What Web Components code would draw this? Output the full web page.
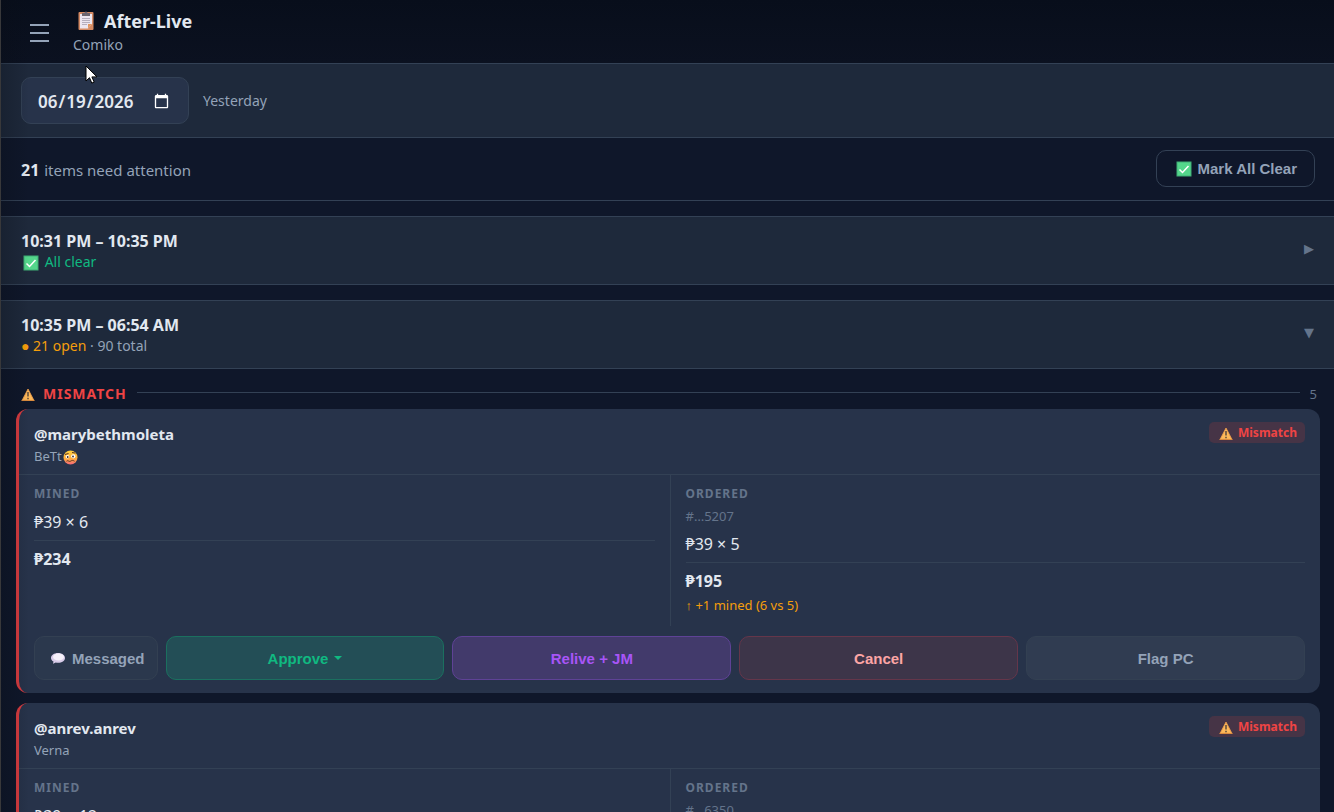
<!DOCTYPE html>
<html lang="en">
<head>
<meta charset="utf-8">
<meta name="viewport" content="width=device-width, initial-scale=1">
<title>After-Live</title>
<style>
  html { background: #0f172a; }
  body {
    margin: 0;
    font-family: "Noto Sans", "Open Sans", sans-serif;
    font-size: 14px;
    line-height: 20px;
    color: #e2e8f0;
    --line: #334155;
    --panel: #1e293b;
    --card: #27334a;
    --muted: #94a3b8;
    --dim: #64748b;
    --red: #ef4444;
    --green: #10b981;
    --amber: #f59e0b;
    --purple: #a855f7;
  }
</style>
</head>
<body>
<app-shell>
  <app-header slot="header" heading="After-Live" shop="Comiko"></app-header>
  <date-bar value="2026-06-19">Yesterday</date-bar>
  <summary-bar count="21"></summary-bar>
  <session-group heading="10:31 PM – 10:35 PM">
    <span slot="status" style="color:var(--green)"><emoji-icon name="check" spaced></emoji-icon> All clear</span>
  </session-group>
  <session-group heading="10:35 PM – 06:54 AM" open>
    <span slot="status"><span style="color:var(--amber)">● 21 open</span> · 90 total</span>
    <section-heading count="5">Mismatch</section-heading>
    <order-card handle="@marybethmoleta">
      <span slot="name">BeTt<emoji-icon name="woozy"></emoji-icon></span>
      <order-column slot="mined" heading="Mined" line="₱39 × 6" total="₱234"></order-column>
      <order-column slot="ordered" heading="Ordered" ref="#…5207" line="₱39 × 5" total="₱195" note="↑ +1 mined (6 vs 5)"></order-column>
    </order-card>
    <order-card handle="@anrev.anrev">
      <span slot="name">Verna</span>
      <order-column slot="mined" heading="Mined" line="₱39 × 12" total="₱468"></order-column>
      <order-column slot="ordered" heading="Ordered" ref="#…6350" line="₱39 × 11" total="₱429" note="↑ +1 mined (12 vs 11)"></order-column>
    </order-card>
  </session-group>
  <mouse-pointer slot="pointer"></mouse-pointer>
</app-shell>

<script>
const define = (name, render) => customElements.define(name, class extends HTMLElement {
  constructor() {
    super();
    this.attachShadow({ mode: "open" });
  }
  connectedCallback() {
    this.shadowRoot.innerHTML = render(this);
  }
});

const attr = (el, name) => el.getAttribute(name) || "";

const ICONS = {
  clipboard: `<svg viewBox="0 0 20 20" width="20" height="20">
    <rect x="2.500" y="1" width="15" height="18" rx="1" fill="#d58a63"/>
    <path d="M4 3h12v10l-4 4.500H4z" fill="#ece6f0"/>
    <path d="M16 13l-4 4.500V13z" fill="#e0955f"/>
    <path d="M6 3.500V2h2.500a1.500 1.500 0 0 1 3 0H14v3H6z" fill="#6d6670"/>
    <path d="M6 7.500h8M6 9.500h8M6 11.500h8M6 13.500h5" stroke="#b5aebd" stroke-width="1"/></svg>`,
  check: `<svg viewBox="0 0 16 16" width="16" height="16">
    <rect x=".5" y=".5" width="15" height="15" fill="#3fae74"/>
    <rect x="1.500" y="1.500" width="13" height="13" fill="#54d68b"/>
    <path d="M3.500 8.500l3 3 6-6.500" fill="none" stroke="#fff" stroke-width="1.500"/></svg>`,
  warning: `<svg viewBox="0 0 16 16" width="16" height="16">
    <path d="M8 3L14 14.500H2z" fill="#fdb95a" stroke="#f0a04b" stroke-width=".8" stroke-linejoin="round"/>
    <path d="M1.500 14.400h13" stroke="#d98a3d" stroke-width="1"/>
    <path d="M8 6v4.500M8 11.700v1.500" stroke="#5b4a3c" stroke-width="1.500"/></svg>`,
  speech: `<svg viewBox="0 0 16 16" width="16" height="16">
    <path d="M8 3c4 0 7 2.200 7 4.900s-3 4.900-7 4.900c-.8 0-1.500-.1-2.200-.2L3 13.800l.5-2.200C2 10.700 1 9.400 1 7.900 1 5.200 4 3 8 3z" fill="#d9cce9"/>
    <ellipse cx="8.500" cy="7" rx="5.500" ry="3.500" fill="#f6f1fa"/></svg>`,
  woozy: `<svg viewBox="0 0 16 16" width="16" height="16">
    <defs><linearGradient id="face" x2="0" y2="1"><stop offset="0" stop-color="#ffd23e"/><stop offset=".6" stop-color="#ffab3d"/><stop offset="1" stop-color="#f4667c"/></linearGradient></defs>
    <circle cx="8.500" cy="7.500" r="7" fill="url(#face)"/>
    <circle cx="5.500" cy="6.800" r="1.800" fill="#fff"/><circle cx="11.300" cy="6.300" r="2.100" fill="#fff"/>
    <circle cx="5.700" cy="7" r=".9" fill="#3b2a24"/><circle cx="11" cy="6.500" r=".9" fill="#3b2a24"/>
    <path d="M3 4.500l3.500-1M10 2.500l3.500.6M4.500 11.200c1.500-1.500 2.500 1 4 0s2.500-1 4 0" fill="none" stroke="#5a3522" stroke-width="1"/></svg>`
};

define("emoji-icon", el => `
  <style>:host { display: inline-block; vertical-align: middle; line-height: 0; } :host([spaced]) { padding: 0 2px; } svg { display: block; }</style>
  ${ICONS[attr(el, "name")]}`);

define("app-shell", () => `
  <style>
    :host { display: flex; flex-direction: column; position: relative; height: 100vh; box-sizing: border-box; border-left: 1px solid #38383a; overflow: hidden; }
    :host::after { content: ""; position: absolute; inset: 0 auto 0 0; width: 28px; background: linear-gradient(90deg, rgba(8, 12, 20, .25), transparent); pointer-events: none; }
    main { flex: 1; min-height: 0; overflow-y: auto; scrollbar-width: none; }
  </style>
  <slot name="header"></slot>
  <main><slot></slot></main>
  <slot name="pointer"></slot>`);

define("app-header", el => `
  <style>
    :host { display: flex; flex: none; align-items: center; gap: 19px; height: 63px; padding: 0 24px; background: linear-gradient(#080e1b, #0b1120); border-bottom: 1px solid var(--line); }
    button { display: block; padding: 6px 4px 4px; border: 0; background: none; color: var(--muted); }
    svg { display: block; }
    h1 { display: flex; align-items: center; gap: 8px; margin: 0; padding-left: 3px; font-size: 18px; line-height: 24px; font-weight: 700; }
    p { margin: 0; line-height: 24px; color: var(--muted); }
    .titles { padding-top: 2px; }
  </style>
  <button type="button" aria-label="Menu"><svg width="21" height="20" viewBox="0 0 21 20"><path d="M1 2h19M1 10h19M1 18h19" stroke="currentColor" stroke-width="2"/></svg></button>
  <div class="titles"><h1><emoji-icon name="clipboard"></emoji-icon>${attr(el, "heading")}</h1><p>${attr(el, "shop")}</p></div>`);

define("date-bar", el => `
  <style>
    :host { display: flex; align-items: center; gap: 14px; height: 73px; padding: 0 20px; background: var(--panel); border-bottom: 1px solid var(--line); color: var(--muted); }
    input { box-sizing: border-box; width: 168px; height: 47px; margin: 0; padding: 2px 16px 0 15px; border: 1px solid var(--line); border-radius: 10px; background: var(--card); color: #e2e8f0; color-scheme: dark; font: 600 17px "Noto Sans", sans-serif; }
    input::-webkit-datetime-edit, input::-webkit-datetime-edit-fields-wrapper { padding: 0; }
  </style>
  <input type="date" aria-label="Date" value="${attr(el, "value")}"><span><slot></slot></span>`);

define("summary-bar", el => `
  <style>
    :host { display: flex; align-items: center; justify-content: space-between; height: 62px; padding: 0 19px 0 20px; border-bottom: 1px solid var(--line); font-size: 15px; color: var(--muted); }
    strong { padding-right: 1px; font-size: 16px; color: #e2e8f0; }
    p { margin: 0; padding-top: 2px; }
    button { display: flex; align-items: center; gap: 6px; height: 37px; margin-bottom: 1px; padding: 0 17px 0 19px; border: 1px solid var(--line); border-radius: 10px; background: none; color: var(--muted); font: 700 15px "Liberation Sans", sans-serif; }
  </style>
  <p><strong>${attr(el, "count")}</strong> items need attention</p>
  <button type="button"><emoji-icon name="check"></emoji-icon><span>Mark All Clear</span></button>`);

define("session-group", el => `
  <style>
    :host { display: block; margin-top: 15px; }
    .head { display: flex; align-items: center; justify-content: space-between; box-sizing: border-box; width: 100%; height: 69px; padding: 0 20px; border: solid var(--line); border-width: 1px 0; background: var(--panel); color: inherit; font: inherit; text-align: left; }
    .text { padding-top: 2px; }
    .title { display: block; font-size: 16px; font-weight: 700; }
    .status { display: block; height: 22px; line-height: 22px; color: var(--muted); }
    .chevron { padding-bottom: 3px; font-family: "DejaVu Sans", sans-serif; font-size: 13px; color: var(--dim); }
  </style>
  <button type="button" class="head" aria-expanded="${el.hasAttribute("open")}">
    <span class="text"><span class="title">${attr(el, "heading")}</span><span class="status"><slot name="status"></slot></span></span>
    <span class="chevron">${el.hasAttribute("open") ? "▼" : "▶"}</span>
  </button>
  <slot></slot>`);

define("section-heading", el => `
  <style>
    :host { display: flex; align-items: center; gap: 10px; padding: 15px 17px 5px 19px; font-size: 13px; color: var(--dim); }
    h2 { display: flex; align-items: center; gap: 7px; margin: 0; font-size: 14px; line-height: 20px; font-weight: 700; letter-spacing: 1px; text-transform: uppercase; color: var(--red); }
    hr { flex: 1; margin: 0 0 3px; border: 0; border-top: 1px solid var(--line); }
  </style>
  <h2><emoji-icon name="warning"></emoji-icon><slot></slot></h2><hr><span>${attr(el, "count")}</span>`);

define("order-card", el => `
  <style>
    :host { display: block; margin: 0 14px 10px 15px; border-left: 3px solid #dc3c40; border-radius: 12px; background: var(--card); }
    header { display: flex; justify-content: space-between; align-items: flex-start; padding: 13px 15px 8px; border-bottom: 1px solid var(--line); }
    h3 { margin: 0; font-size: 15px; line-height: 24px; font-weight: 700; }
    .name { height: 20px; font-size: 13px; line-height: 20px; color: var(--muted); }
    .badge { display: flex; align-items: center; gap: 4px; height: 21px; padding: 0 8px 0 9px; border-radius: 5px; background: #463446; font-size: 12px; font-weight: 700; color: var(--red); }
    .columns { display: grid; grid-template-columns: 1fr 1fr; }
    .columns > div { padding: 9px 15px 11px; }
    .columns > div + div { border-left: 1px solid var(--line); }
    .actions { display: flex; gap: 8px; padding: 10px 15px 13px; }
    button { flex: 1; display: flex; align-items: center; justify-content: center; gap: 6px; height: 44px; padding: 0 12px; border: 1px solid #334052; border-radius: 10px; background: #303c51; color: var(--muted); font: 700 15px "Liberation Sans", sans-serif; }
    .messaged { flex: none; padding-left: 15px; background: #2b384d; }
    .approve { border-color: #1b705f; background: #234e56; color: var(--green); }
    .relive { border-color: #5f4296; background: #423a6b; color: var(--purple); }
    .cancel { border-color: #65364a; background: #3d3549; color: #fca5a5; }
    .caret { border: solid transparent; border-width: 4px 4px 0; border-top-color: currentColor; }
  </style>
  <header>
    <div><h3>${attr(el, "handle")}</h3><div class="name"><slot name="name"></slot></div></div>
    <span class="badge"><emoji-icon name="warning"></emoji-icon>Mismatch</span>
  </header>
  <div class="columns"><div><slot name="mined"></slot></div><div><slot name="ordered"></slot></div></div>
  <div class="actions">
    <button type="button" class="messaged"><emoji-icon name="speech"></emoji-icon>Messaged</button>
    <button type="button" class="approve">Approve <span class="caret"></span></button>
    <button type="button" class="relive">Relive + JM</button>
    <button type="button" class="cancel">Cancel</button>
    <button type="button">Flag PC</button>
  </div>`);

define("order-column", el => `
  <style>
    :host { display: block; }
    h4 { margin: 0; font-size: 12px; line-height: 20px; font-weight: 700; letter-spacing: 1px; text-transform: uppercase; color: var(--dim); }
    p { margin: 0; }
    .ref { padding-top: 2px; font-size: 13px; line-height: 20px; color: var(--dim); }
    .line { padding: 7px 0; font-size: 16px; line-height: 22px; border-bottom: 1px solid var(--line); }
    .total { padding-top: 7px; font-size: 16px; line-height: 22px; font-weight: 700; }
    .note { padding-top: 3px; font-size: 13px; line-height: 20px; color: var(--amber); }
  </style>
  <h4>${attr(el, "heading")}</h4>
  ${attr(el, "ref") ? `<p class="ref">${attr(el, "ref")}</p>` : ""}
  <p class="line">${attr(el, "line")}</p>
  <p class="total">${attr(el, "total")}</p>
  ${attr(el, "note") ? `<p class="note">${attr(el, "note")}</p>` : ""}`);

define("mouse-pointer", () => `
  <style>:host { position: absolute; left: 84px; top: 65px; pointer-events: none; } svg { display: block; }</style>
  <svg width="13" height="20" viewBox="0 0 13 20"><path d="M1 1v15l3.500-3.300 2.300 5.400 2.400-1-2.300-5.200H12z" fill="#fff" stroke="#000" stroke-width="1"/></svg>`);
</script>
</body>
</html>
